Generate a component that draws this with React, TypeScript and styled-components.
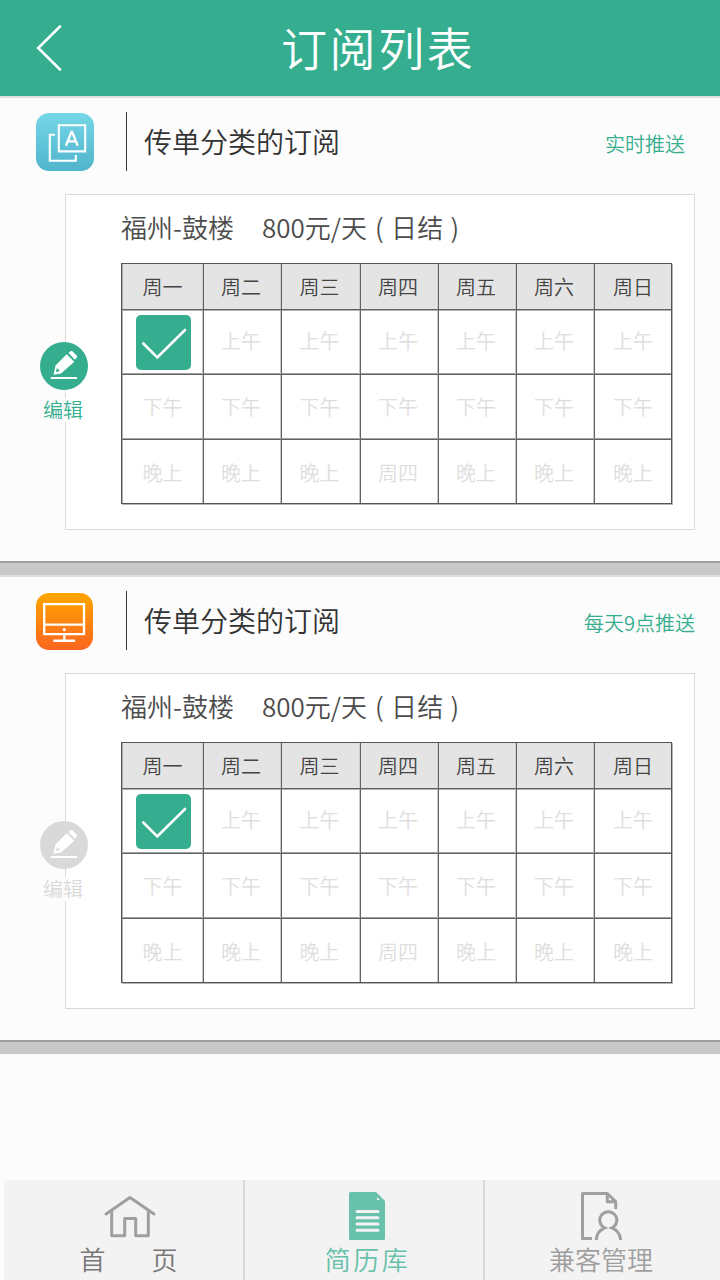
import React from "react";
import styled, { createGlobalStyle } from "styled-components";

const GREEN = "#35ae8f";
const SANS = '"Noto Sans CJK SC", "Noto Sans", sans-serif';

const GlobalStyle = createGlobalStyle`
  * { box-sizing: border-box; }
  body { margin: 0; background: #fcfcfc; font-family: ${SANS}; font-weight: 350; }
`;

const Screen = styled.div`
  width: 720px;
  height: 1280px;
  display: flex;
  flex-direction: column;
  background: #fcfcfc;
  overflow: hidden;
`;

const Header = styled.header`
  height: 96px;
  flex: none;
  display: flex;
  align-items: center;
  background: ${GREEN};
  color: #fff;
`;

const BackButton = styled.button`
  width: 64px;
  height: 96px;
  padding: 0 0 0 36px;
  border: 0;
  background: none;
  display: flex;
  align-items: center;
`;

const Title = styled.h1`
  flex: 1;
  margin: 0 0 4px;
  padding-left: 217px;
  font-size: 46px;
  line-height: 64px;
  font-weight: 350;
  letter-spacing: 2.6px;
  white-space: nowrap;
`;

const Section = styled.section`
  height: 479px;
  flex: none;
  display: flex;
  flex-direction: column;
  border-top: 2px solid #e0e0e0;
`;

const SectionHead = styled.div`
  height: 96px;
  flex: none;
  display: flex;
  align-items: flex-start;
  padding: 14px 0 0 36px;
`;

const IconTile = styled.div<{ $size: number; $top: string; $bottom: string; $shift: number }>`
  width: ${(p) => p.$size}px;
  height: ${(p) => p.$size}px;
  margin: ${(p) => p.$shift}px ${(p) => 90 - p.$size}px 0 0;
  border-radius: 13px;
  background: linear-gradient(${(p) => p.$top}, ${(p) => p.$bottom});
  flex: none;
  svg { display: block; }
`;

const SectionTitle = styled.h2`
  flex: 1;
  height: 59px;
  margin: 0;
  padding-left: 17px;
  border-left: 1px solid #333;
  font-size: 28px;
  line-height: 59px;
  font-weight: 350;
  color: #333;
`;

const PushLabel = styled.span<{ $right: number }>`
  padding-right: ${(p) => p.$right}px;
  font-size: 20px;
  line-height: 64px;
  font-weight: 350;
  color: ${GREEN};
`;

const Panel = styled.div`
  position: relative;
  width: 630px;
  height: 336px;
  margin-left: 65px;
  padding: 12px 0 0 55px;
  border: 1px solid #d9d9d9;
  background: #fff;
`;

const JobLine = styled.div`
  height: 56px;
  display: flex;
  font-size: 26px;
  line-height: 40px;
  color: #4c4c4c;
  white-space: pre;
`;

const Place = styled.span`
  width: 141px;
`;

const Settlement = styled.span`
  margin-left: 8px;
  letter-spacing: 0.2px;
  word-spacing: 1.2px;
`;

const EditButton = styled.button<{ $color: string }>`
  position: absolute;
  left: -26px;
  top: 147px;
  width: 48px;
  padding: 0;
  border: 0;
  background: none;
  display: flex;
  flex-direction: column;
  align-items: center;
  font-family: ${SANS};
  font-weight: 350;
  font-size: 20px;
  line-height: 24px;
  color: ${(p) => p.$color};
  svg { display: block; margin-bottom: 8px; }
`;

const EditLabel = styled.span`
  height: 24px;
  margin-left: -2px;
  background: linear-gradient(90deg, #fcfcfc 23px, #fff 23px);
  white-space: nowrap;
`;

const Table = styled.div`
  width: 551px;
  display: grid;
  grid-template-columns: 82px 78px 79px 78px 78px 78px 76px;
  grid-template-rows: 46px 65px 65px 63px;
  border: 1px solid #555;
  box-shadow: 1px 1px 0 #b5b5b5;
`;

const Cell = styled.div<{ $head?: boolean; $col: number; $row: number }>`
  display: flex;
  align-items: center;
  justify-content: center;
  padding-right: ${(p) => (p.$col > 0 && p.$col < 6 ? 3 : 0)}px;
  padding-bottom: ${(p) => (p.$row === 1 ? 3 : p.$row === 2 ? 1 : 0)}px;
  padding-top: ${(p) => (p.$row === 3 ? 2 : 0)}px;
  font-size: 20px;
  line-height: 28px;
  color: ${(p) => (p.$head ? "#444" : "#dedede")};
  background: ${(p) => (p.$head ? "#e4e4e4" : "#fff")};
  border-right: ${(p) => (p.$col === 6 ? "0" : "1px solid #626262")};
  border-bottom: ${(p) => (p.$row === 3 ? "0" : "1px solid #626262")};
  box-shadow:
    inset ${(p) => (p.$col === 0 ? 1 : 0)}px ${(p) => (p.$row === 1 ? 1 : 0)}px 0 #b0b0b0,
    inset ${(p) => (p.$col === 6 ? 0 : -1)}px 0 0 ${(p) => (p.$head ? "#cfcfcf" : "#c8c8c8")},
    inset 0 ${(p) => (p.$row === 1 || p.$row === 2 ? -1 : 0)}px 0 #a0a0a0;
`;

const CheckBox = styled.span`
  display: block;
  margin: 4px 0 0 2px;
  svg { display: block; }
`;

const Divider = styled.div`
  height: 14px;
  margin-top: auto;
  background: #c8c8c8;
  border-top: 2px solid #a0a0a0;
`;

const TabBar = styled.nav`
  height: 100px;
  margin: auto 0 0 4px;
  flex: none;
  display: grid;
  grid-template-columns: 241px 240px 235px;
  background: #f3f3f3;
`;

const Tab = styled.a<{ $color: string; $spacing?: number; $left?: number; $right?: number }>`
  display: flex;
  flex-direction: column;
  align-items: center;
  padding: 11px ${(p) => p.$right ?? 0}px 0 ${(p) => p.$left ?? 0}px;
  font-size: 26px;
  line-height: 36px;
  letter-spacing: ${(p) => p.$spacing ?? 0}px;
  color: ${(p) => p.$color};
  white-space: nowrap;
  &:not(:last-child) { border-right: 2px solid #d9d9d9; }
  svg { display: block; margin-bottom: 1px; }
`;

const SpacedLabel = styled.span`
  display: flex;
  gap: 46px;
  margin-right: 2px;
`;

const BackIcon = () => (
  <svg width="28" height="48" viewBox="0 0 28 48" fill="none" stroke="#fff" strokeWidth="2.6" strokeLinecap="round">
    <path d="M24 2.5 2.2 24 24 45.5" />
  </svg>
);

const FlyerIcon = () => (
  <svg width="58" height="58" viewBox="0 0 58 58" fill="none" stroke="#fff" strokeWidth="2.1">
    <path d="M22.8 12.2h26.4v26.2H22.8z" />
    <path d="M19 21.8h-5.2v26h26V42" />
    <path d="m29.9 32.7 5.5-13.7h.8l5.5 13.7M31.5 28.4h8.6" strokeWidth="2.3" />
  </svg>
);

const MonitorIcon = () => (
  <svg width="57" height="57" viewBox="0 0 57 57" fill="none" stroke="#fff" strokeWidth="2.3">
    <path d="M8.2 11.2H48v30H8.2zM8.2 31.6H48M28.3 41v6" />
    <path d="M18.5 47.7H38" strokeWidth="2.6" strokeLinecap="round" />
    <circle cx="28.3" cy="36.6" r="1.6" fill="#fff" stroke="none" />
  </svg>
);

const EditIcon = ({ color }: { color: string }) => (
  <svg width="48" height="48" viewBox="0 0 48 48">
    <circle cx="24" cy="24" r="24" fill={color} />
    <path
      d="m26.7 12.3 7.6 7.4L21 31.5l-7.5 1.3 2-9.3zM28.5 10.9l2.3-2h1.3l5 5v1.3l-2.2 2.5z"
      fill="#fff"
    />
    <path d="m16.8 26 3.2 2.7-4 1.6z" fill={color} />
    <path d="M10.7 36H37" stroke="#fff" strokeWidth="2" />
  </svg>
);

const CheckIcon = () => (
  <svg width="55" height="55" viewBox="0 0 55 55">
    <rect width="55" height="55" rx="5" fill={GREEN} />
    <path d="m7.3 28.5 14 14L49 15" fill="none" stroke="#fff" strokeWidth="2.6" strokeLinecap="round" />
  </svg>
);

const HomeIcon = () => (
  <svg width="54" height="49" viewBox="0 1 54 49" fill="none" stroke="#9f9f9f" strokeWidth="3" strokeLinecap="round" strokeLinejoin="round">
    <path d="M3 24 27 7.5 51 24" />
    <path d="M8.7 21v24.7h13V28.5h11v17.2h12.6V21" />
  </svg>
);

const ResumeIcon = () => (
  <svg width="38" height="49" viewBox="0 0 38 49">
    <path d="M1.5 1H27l9 9v37.5q0 1.5-1.5 1.5h-33Q0 49 0 47.5v-45Q0 1 1.5 1z" fill="#68c1aa" />
    <path d="M28 6v3h3z" fill="#f3f3f3" />
    <path d="M8 20.500h21M8 26.700h21M8 33h21M8 39.300h21" stroke="#f3f3f3" strokeWidth="3" strokeLinecap="round" />
  </svg>
);

const ManageIcon = () => (
  <svg width="42" height="49" viewBox="-1 0 42 49" fill="none" stroke="#9f9f9f" strokeWidth="3">
    <path d="M11 47.5H1.5v-45h24.8l8.4 8V18M26.3 3v7.8h8.4" strokeLinejoin="round" />
    <path d="M15.3 49.5c0-6.5 3.2-10.3 8.4-12.6a8.5 8.5 0 1 1 7.2 0c5.2 2.3 8.4 6.1 8.8 12.6" />
  </svg>
);

const days = ["周一", "周二", "周三", "周四", "周五", "周六", "周日"];
const rows = [
  days,
  days.map((_, i) => (i === 0 ? "" : "上午")),
  days.map(() => "下午"),
  days.map((_, i) => (i === 3 ? "周四" : "晚上")),
];

const Schedule = () => (
  <Table>
    {rows.map((row, r) =>
      row.map((text, c) => (
        <Cell key={`${r}-${c}`} $head={r === 0} $row={r} $col={c}>
          {text || (
            <CheckBox>
              <CheckIcon />
            </CheckBox>
          )}
        </Cell>
      ))
    )}
  </Table>
);

interface SubscriptionProps {
  icon: React.ReactNode;
  push: string;
  pushRight: number;
  editColor: string;
}

const Subscription = ({ icon, push, pushRight, editColor }: SubscriptionProps) => (
  <Section>
    <SectionHead>
      {icon}
      <SectionTitle>传单分类的订阅</SectionTitle>
      <PushLabel $right={pushRight}>{push}</PushLabel>
    </SectionHead>
    <Panel>
      <JobLine>
        <Place>福州-鼓楼</Place>
        <span>800元/天</span>
        <Settlement>( 日结 )</Settlement>
      </JobLine>
      <Schedule />
      <EditButton $color={editColor}>
        <EditIcon color={editColor} />
        <EditLabel>编辑</EditLabel>
      </EditButton>
    </Panel>
    <Divider />
  </Section>
);

export default function App() {
  return (
    <Screen>
      <GlobalStyle />
      <Header>
        <BackButton aria-label="返回">
          <BackIcon />
        </BackButton>
        <Title>订阅列表</Title>
      </Header>
      <Subscription
        icon={
          <IconTile $size={58} $shift={1} $top="#75d6e6" $bottom="#50b4cc">
            <FlyerIcon />
          </IconTile>
        }
        push="实时推送"
        pushRight={35}
        editColor={GREEN}
      />
      <Subscription
        icon={
          <IconTile $size={57} $shift={2} $top="#ffa600" $bottom="#fb651f">
            <MonitorIcon />
          </IconTile>
        }
        push="每天9点推送"
        pushRight={25}
        editColor="#d9d9d9"
      />
      <TabBar>
        <Tab $color="#777" $left={12}>
          <HomeIcon />
          <SpacedLabel>
            <span>首</span>
            <span>页</span>
          </SpacedLabel>
        </Tab>
        <Tab $color="#68c1aa" $spacing={2.5} $left={7}>
          <ResumeIcon />
          简历库
        </Tab>
        <Tab $color="#9f9f9f" $right={3}>
          <ManageIcon />
          兼客管理
        </Tab>
      </TabBar>
    </Screen>
  );
}
